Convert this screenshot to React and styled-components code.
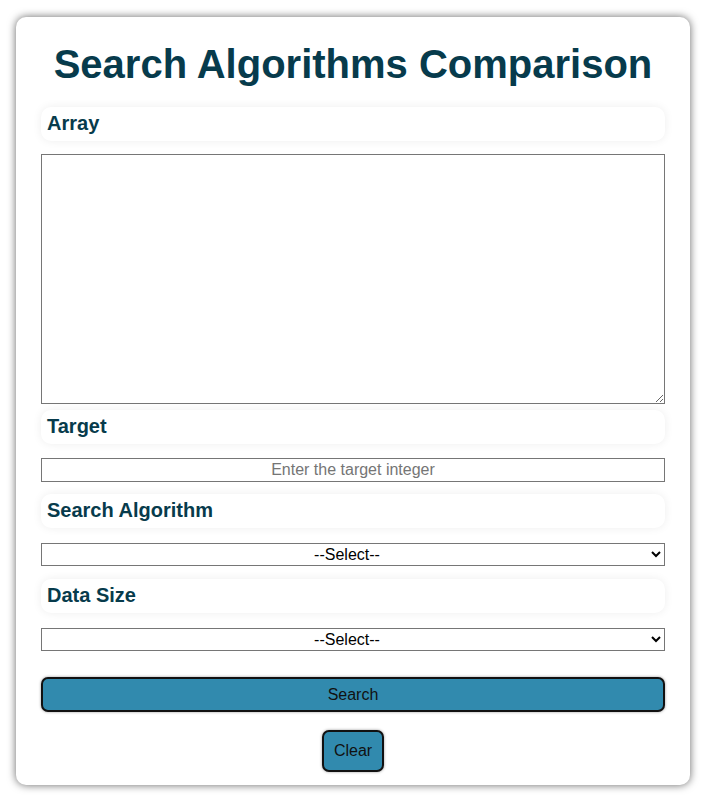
import React from 'react';
import styled, { createGlobalStyle } from 'styled-components';

const GlobalStyle = createGlobalStyle`
  body {
    margin: 0;
    background: #ffffff;
    font-family: "Liberation Sans", Arial, sans-serif;
  }
`;

const Page = styled.div`
  padding: 17px 15px 15px 16px;
`;

const Card = styled.form`
  width: 674px;
  box-sizing: border-box;
  padding: 0 25px 13px;
  background: #ffffff;
  border-radius: 10px;
  box-shadow: 0 0 8px rgba(0, 0, 0, 0.6);
  display: flex;
  flex-direction: column;
`;

const Title = styled.h1`
  margin: 22px 0 17px;
  text-align: center;
  font-size: 40px;
  line-height: 51px;
  font-weight: 700;
  color: #073b4c;
`;

const Label = styled.label`
  display: block;
  height: 34px;
  box-sizing: border-box;
  padding: 5px 6px;
  border-radius: 10px;
  background: #ffffff;
  box-shadow: 0 0 10px rgba(0, 0, 0, 0.07);
  font-size: 20px;
  font-weight: 700;
  color: #073b4c;
  margin-bottom: ${p => p.$gap || 14}px;
`;

const ArrayField = styled.textarea`
  display: block;
  height: 250px;
  box-sizing: border-box;
  border: 1px solid #767676;
  margin: 0 0 6px;
  resize: vertical;
  font-family: "Liberation Sans", Arial, sans-serif;
`;

const TargetField = styled.input`
  display: block;
  height: 24px;
  box-sizing: border-box;
  border: 1px solid #767676;
  margin: 0 0 12px;
  padding: 0;
  text-align: center;
  font-size: 16px;
  font-family: "Liberation Sans", Arial, sans-serif;
  &::placeholder {
    color: #757575;
  }
`;

const Select = styled.select`
  display: block;
  height: 23px;
  box-sizing: border-box;
  border: 1px solid #767676;
  border-radius: 0;
  background: #ffffff;
  margin: 0 0 ${p => p.$gap || 13}px;
  text-align: center;
  text-align-last: center;
  font-size: 16px;
  color: #000;
  font-family: "Liberation Sans", Arial, sans-serif;
`;

const Button = styled.button`
  background: #318aae;
  border: 2px solid #111;
  border-radius: 7px;
  box-shadow: 0 0 3px rgba(0, 0, 0, 0.4);
  font-size: 16px;
  color: #111;
  font-family: "Liberation Sans", Arial, sans-serif;
  cursor: pointer;
`;

const SearchButton = styled(Button)`
  height: 35px;
  margin-bottom: 18px;
`;

const ClearButton = styled(Button)`
  align-self: center;
  height: 42px;
  padding: 0 10px;
`;

export default function App() {
  return (
    <>
      <GlobalStyle />
      <Page>
        <Card onSubmit={e => e.preventDefault()}>
          <Title>Search Algorithms Comparison</Title>
          <Label $gap={13}>Array</Label>
          <ArrayField />
          <Label>Target</Label>
          <TargetField placeholder="Enter the target integer" />
          <Label $gap={15}>Search Algorithm</Label>
          <Select defaultValue="">
            <option value="">--Select--</option>
            <option value="linear">Linear Search</option>
            <option value="binary">Binary Search</option>
          </Select>
          <Label $gap={15}>Data Size</Label>
          <Select defaultValue="" $gap={26}>
            <option value="">--Select--</option>
            <option value="small">Small</option>
            <option value="large">Large</option>
          </Select>
          <SearchButton type="submit">Search</SearchButton>
          <ClearButton type="button">Clear</ClearButton>
        </Card>
      </Page>
    </>
  );
}
